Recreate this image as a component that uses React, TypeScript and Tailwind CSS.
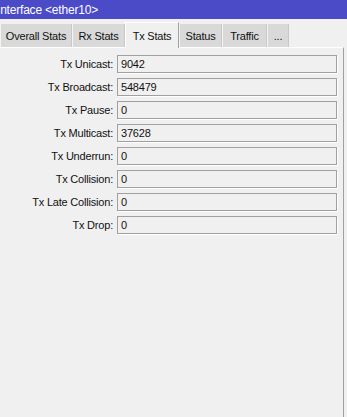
const tabs = [
  { label: "Overall Stats", w: "w-[72px]" },
  { label: "Rx Stats", w: "w-[53px]" },
  { label: "Tx Stats", w: "w-[54px]", active: true },
  { label: "Status", w: "w-[43px]" },
  { label: "Traffic", w: "w-[45px]" },
  { label: "...", w: "w-[22px]" },
];

const rows = [
  ["Tx Unicast:", "9042"],
  ["Tx Broadcast:", "548479"],
  ["Tx Pause:", "0"],
  ["Tx Multicast:", "37628"],
  ["Tx Underrun:", "0"],
  ["Tx Collision:", "0"],
  ["Tx Late Collision:", "0"],
  ["Tx Drop:", "0"],
];

export default function App() {
  return (
    <div className="w-[347px] h-[417px] overflow-hidden bg-[#f0f0f0] font-['Liberation_Sans',Arial,sans-serif] text-[11px] tracking-[-0.2px] text-[#111]">
      <div className="h-[19px] bg-[#4b4bc8] text-white text-[12px] leading-[20px] whitespace-nowrap">
        <span className="-ml-[3px]">Interface &lt;ether10&gt;</span>
      </div>

      <div className="h-[28px] flex items-end">
        {tabs.map((t) =>
          t.active ? (
            <div
              key={t.label}
              className={`${t.w} h-[26px] -mb-px relative z-10 bg-[#f0f0f0] border-l border-t border-white border-r border-r-[#a0a0a0] flex items-start justify-center pt-[5px] text-[#111]`}
            >
              {t.label}
            </div>
          ) : (
            <div
              key={t.label}
              className={`${t.w} h-[23px] bg-[#d9d9d9] border-l border-[#f4f4f4] border-r border-r-[#c8c8c8] flex items-center justify-center pt-[2px]`}
            >
              {t.label}
            </div>
          )
        )}
      </div>

      <div className="w-[344px] h-[370px] border-t border-white border-r border-r-[#a0a0a0] pt-[7px] flex flex-col gap-[5px]">
        {rows.map(([label, value]) => (
          <div key={label} className="flex items-center h-[18px]">
            <div className="w-[114px] text-right pr-[1px] whitespace-nowrap">{label}</div>
            <div className="ml-[3px] w-[220px] h-[18px] border border-[#a0a0a0] shadow-[1px_1px_0_#ffffff] bg-[#f0f0f0] pl-[3px] leading-[16px]">
              {value}
            </div>
          </div>
        ))}
      </div>
    </div>
  );
}
